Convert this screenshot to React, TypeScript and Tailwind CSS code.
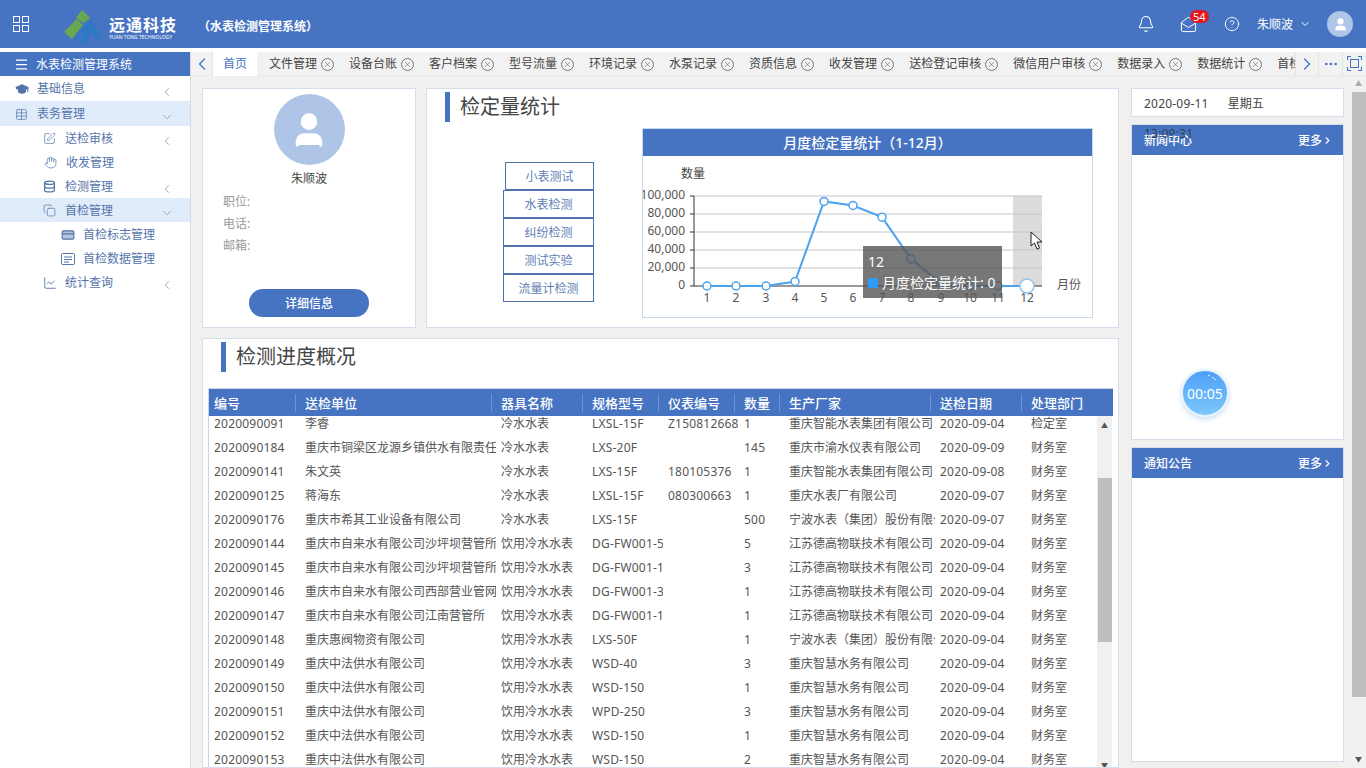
import type { ReactNode } from "react";
import { Bell, ChevronDown, ChevronLeft, ChevronRight, CircleHelp, Ellipsis, GraduationCap, MailOpen, Menu, Table, SquarePen, Hand, Database, Copy, CreditCard, ChartLine, User, X } from "lucide-react";

const tabs = ["文件管理", "设备台账", "客户档案", "型号流量", "环境记录", "水泵记录", "资质信息", "收发管理", "送检登记审核", "微信用户审核", "数据录入", "数据统计"];

const columns = [
  { label: "编号", w: "w-[87px]" },
  { label: "送检单位", w: "w-[196px]" },
  { label: "器具名称", w: "w-[91px]" },
  { label: "规格型号", w: "w-[76px]" },
  { label: "仪表编号", w: "w-[76px]" },
  { label: "数量", w: "w-[45px]" },
  { label: "生产厂家", w: "w-[151px]" },
  { label: "送检日期", w: "w-[91px]" },
  { label: "处理部门", w: "w-[76px]" },
];

const rows = [
  ["2020090091", "李睿", "冷水水表", "LXSL-15F", "Z150812668", "1", "重庆智能水表集团有限公司", "2020-09-04", "检定室"],
  ["2020090184", "重庆市铜梁区龙源乡镇供水有限责任公司", "冷水水表", "LXS-20F", "", "145", "重庆市渝水仪表有限公司", "2020-09-09", "财务室"],
  ["2020090141", "朱文英", "冷水水表", "LXS-15F", "180105376", "1", "重庆智能水表集团有限公司", "2020-09-08", "财务室"],
  ["2020090125", "蒋海东", "冷水水表", "LXSL-15F", "080300663", "1", "重庆水表厂有限公司", "2020-09-07", "财务室"],
  ["2020090176", "重庆市希其工业设备有限公司", "冷水水表", "LXS-15F", "", "500", "宁波水表（集团）股份有限公司", "2020-09-07", "财务室"],
  ["2020090144", "重庆市自来水有限公司沙坪坝营管所", "饮用冷水水表", "DG-FW001-5", "", "5", "江苏德高物联技术有限公司", "2020-09-04", "财务室"],
  ["2020090145", "重庆市自来水有限公司沙坪坝营管所", "饮用冷水水表", "DG-FW001-1", "", "3", "江苏德高物联技术有限公司", "2020-09-04", "财务室"],
  ["2020090146", "重庆市自来水有限公司西部营业管网", "饮用冷水水表", "DG-FW001-3", "", "1", "江苏德高物联技术有限公司", "2020-09-04", "财务室"],
  ["2020090147", "重庆市自来水有限公司江南营管所", "饮用冷水水表", "DG-FW001-1", "", "1", "江苏德高物联技术有限公司", "2020-09-04", "财务室"],
  ["2020090148", "重庆惠阀物资有限公司", "饮用冷水水表", "LXS-50F", "", "1", "宁波水表（集团）股份有限公司", "2020-09-04", "财务室"],
  ["2020090149", "重庆中法供水有限公司", "饮用冷水水表", "WSD-40", "", "3", "重庆智慧水务有限公司", "2020-09-04", "财务室"],
  ["2020090150", "重庆中法供水有限公司", "饮用冷水水表", "WSD-150", "", "1", "重庆智慧水务有限公司", "2020-09-04", "财务室"],
  ["2020090151", "重庆中法供水有限公司", "饮用冷水水表", "WPD-250", "", "3", "重庆智慧水务有限公司", "2020-09-04", "财务室"],
  ["2020090152", "重庆中法供水有限公司", "饮用冷水水表", "WSD-150", "", "1", "重庆智慧水务有限公司", "2020-09-04", "财务室"],
  ["2020090153", "重庆中法供水有限公司", "饮用冷水水表", "WSD-150", "", "2", "重庆智慧水务有限公司", "2020-09-04", "财务室"],
];

function Logo() {
  return (
    <svg width="36" height="36" viewBox="0 0 36 36" className="mt-[8px]">
      <path d="M0 22 L13 9 L19 15 L8 29 Z" fill="#6aa84f" />
      <path d="M12 8 L18 0 L26 8 L20 13 Z" fill="#6aa84f" />
      <path d="M21 14 L27 10 L36 24 L33 30 L26 21 L23 35 L17 34 L19 20 L12 32 L9 30 Z" fill="#2f78c4" />
    </svg>
  );
}

function TrendChart() {
  // x positions read off the reference, relative to the chart box
  const xs = [707, 736, 766, 795, 824, 853, 882, 911, 941, 970, 998, 1027].map((x) => x - 643);
  const values = [0, 0, 0, 5000, 94000, 89500, 76500, 30000, 3000, 0, 0, 0];
  const y = (v: number) => 130 - (v / 100000) * 90;
  const pts = xs.map((x, i) => `${x},${y(values[i])}`).join(" ");
  return (
    <svg width="449" height="161" viewBox="0 0 449 161" className="block">
      <rect x="370" y="40" width="29" height="90" fill="#dcdcdc" />
      {[0, 20000, 40000, 60000, 80000, 100000].map((v) => (
        <g key={v}>
          <line x1="51" x2="399" y1={y(v)} y2={y(v)} stroke={v === 0 ? "#333" : "#c4c4c4"} />
          <line x1="47" x2="51" y1={y(v)} y2={y(v)} stroke="#333" />
          <text x="42" y={y(v) + 3} textAnchor="end" fontSize="12" fill="#555">{v.toLocaleString("en-US")}</text>
        </g>
      ))}
      <line x1="51" x2="51" y1="40" y2="130" stroke="#333" />
      <text x="38" y="22" fontSize="12" fill="#444">数量</text>
      <text x="414" y="133" fontSize="12" fill="#555">月份</text>
      {xs.map((x, i) => (
        <text key={x} x={x} y="146" textAnchor="middle" fontSize="12" fill="#555">{i + 1}</text>
      ))}
      <polyline points={pts} fill="none" stroke="#4ba3ee" strokeWidth="2" />
      {xs.map((x, i) => (
        <circle key={x} cx={x} cy={y(values[i])} r={i === 11 ? 7 : 4} fill="#fff" stroke={i === 11 ? "#8fc4ef" : "#4ba3ee"} strokeWidth="1.5" />
      ))}
    </svg>
  );
}

function SectionTitle({ text }: { text: string }) {
  return (
    <div className="flex items-center gap-[10px]">
      <div className="h-[30px] w-[5px] bg-[#4774c2]" />
      <h2 className="text-[20px] font-normal leading-[30px] text-[#444]">{text}</h2>
    </div>
  );
}

function SideItem({ icon, label, indent, h, active, arrow, open }: { icon: ReactNode; label: string; indent: string; h: string; active?: boolean; arrow?: boolean; open?: boolean }) {
  return (
    <div className={`flex items-center pt-px text-[12px] text-[#5474ab] ${h} ${indent} ${active ? "bg-[#e1ecfb]" : ""}`}>
      <span className="flex w-[22px] shrink-0 items-center">{icon}</span>
      <span>{label}</span>
      {arrow && (
        <span className="absolute left-[160px] mt-[5px] text-[#888]">
          {open ? <ChevronDown size={14} strokeWidth={1.2} /> : <ChevronLeft size={14} strokeWidth={1.2} />}
        </span>
      )}
    </div>
  );
}

function NewsPanel({ title, className, children }: { title: string; className: string; children?: ReactNode }) {
  return (
    <div className={`relative border border-[#d5dfec] bg-white ${className}`}>
      <div className="flex h-[30px] items-center justify-between bg-[#4774c2] pl-3 pr-[10px] pt-px text-[12px] font-medium text-white">
        <span>{title}</span>
        <span className="flex items-center">更多<ChevronRight size={11} strokeWidth={2.5} /></span>
      </div>
      {children}
    </div>
  );
}

export default function App() {
  return (
    <div className="flex h-[768px] w-[1366px] flex-col overflow-hidden bg-[#f0f0f0] font-['Noto_Sans','Noto_Sans_CJK_SC',sans-serif]">
      {/* top bar */}
      <header className="flex h-12 shrink-0 items-center bg-[#4774c2] text-white">
        <div className="ml-[13px] grid h-4 w-4 grid-cols-2 gap-[2px]">
          <span className="border border-white" /><span className="border border-white" /><span className="border border-white" /><span className="border border-white" />
        </div>
        <div className="ml-[35px]"><Logo /></div>
        <div className="ml-[9px] flex w-[70px] flex-col pt-[8px]">
          <span className="text-[16px] font-bold leading-[16px] tracking-[1px]">远通科技</span>
          <span className="mt-[2px] whitespace-nowrap text-[5px] leading-[5px]">YUAN TONG TECHNOLOGY</span>
        </div>
        <span className="ml-[19px] mt-[6px] text-[12px] font-bold">（水表检测管理系统）</span>
        <div className="ml-auto flex items-center">
          <Bell size={18} strokeWidth={1.4} />
          <span className="relative ml-[25px]">
            <MailOpen size={17} strokeWidth={1.4} />
            <span className="absolute left-[10px] top-[-6px] rounded-full bg-[#e8141c] px-[3px] text-[11px] leading-[13px]">54</span>
          </span>
          <CircleHelp size={16} strokeWidth={1.4} className="ml-[27px]" />
          <span className="ml-[17px] mt-[2px] text-[12px]">朱顺波</span>
          <ChevronDown size={12} className="ml-[6px]" />
          <span className="ml-[16px] mr-[13px] flex h-[26px] w-[26px] items-center justify-center rounded-full bg-[#b0c6e8]">
            <User size={15} fill="#fff" stroke="#fff" />
          </span>
        </div>
      </header>

      <div className="h-1 shrink-0 bg-white" />

      <div className="flex min-h-0 flex-1">
        {/* sidebar */}
        <aside className="relative w-[191px] shrink-0 border-r border-[#dddddd] bg-white">
          <div className="flex h-6 items-center bg-[#4774c2] pl-[14px] pt-px text-[12px] text-white">
            <Menu size={15} className="mr-[7px]" />
            水表检测管理系统
          </div>
          <SideItem h="h-[25px]" indent="pl-[15px]" label="基础信息" arrow icon={<GraduationCap size={14} fill="#5474ab" />} />
          <SideItem h="h-[25px]" indent="pl-[15px]" label="表务管理" active arrow open icon={<Table size={13} strokeWidth={1.3} />} />
          <SideItem h="h-6" indent="pl-[43px]" label="送检审核" arrow icon={<SquarePen size={13} strokeWidth={1.3} />} />
          <SideItem h="h-6" indent="pl-[44px]" label="收发管理" icon={<Hand size={13} strokeWidth={1.3} />} />
          <SideItem h="h-6" indent="pl-[43px]" label="检测管理" arrow icon={<Database size={13} strokeWidth={2.4} />} />
          <SideItem h="h-6" indent="pl-[43px]" label="首检管理" active arrow open icon={<Copy size={13} strokeWidth={1.3} />} />
          <SideItem h="h-6" indent="pl-[61px]" label="首检标志管理" icon={<CreditCard size={14} fill="#b6c6e0" />} />
          <SideItem
            h="h-6"
            indent="pl-[61px]"
            label="首检数据管理"
            icon={
              <svg width="14" height="12" viewBox="0 0 14 12" fill="none" stroke="currentColor">
                <rect x="0.5" y="0.5" width="13" height="11" rx="1" />
                <path d="M3 4 H11 M3 6.5 H11 M3 9 H8" />
              </svg>
            }
          />
          <SideItem h="h-6" indent="pl-[43px]" label="统计查询" arrow icon={<ChartLine size={14} strokeWidth={1.5} />} />
        </aside>

        <div className="flex min-w-0 flex-1 flex-col">
          {/* tab bar */}
          <div className="flex h-6 shrink-0 items-center border-b border-[#e8e8e8] bg-[#f2f2f2] text-[12px] text-[#444]">
            <span className="flex h-6 w-[22px] shrink-0 items-center justify-center border-r border-[#e4e4e4] text-[#4774c2]"><ChevronLeft size={20} strokeWidth={1.5} /></span>
            <span className="flex h-6 w-[44px] shrink-0 items-center justify-center bg-white pt-px text-[#4774c2]">首页</span>
            <div className="flex min-w-0 flex-1 items-center overflow-hidden whitespace-nowrap pl-[12px] pt-px">
              {tabs.map((t) => (
                <span key={t} className="mr-[15px] flex shrink-0 items-center gap-[4px]">
                  {t}
                  <span className="flex h-[13px] w-[13px] items-center justify-center rounded-full border border-[#777]"><X size={9} strokeWidth={1.3} /></span>
                </span>
              ))}
              <span className="shrink-0">首检管理</span>
            </div>
            <span className="flex h-6 w-[23px] shrink-0 items-center justify-center border-l border-[#e4e4e4] text-[#4774c2]"><ChevronRight size={20} strokeWidth={1.5} /></span>
            <span className="flex h-6 w-[24px] shrink-0 items-center justify-center border-l border-[#e4e4e4] text-[#4774c2]"><Ellipsis size={16} /></span>
            <span className="flex h-6 w-[24px] shrink-0 items-center justify-center border-l border-[#e4e4e4] text-[#4774c2]">
              <svg width="15" height="15" viewBox="0 0 15 15" fill="none" stroke="currentColor">
                <path d="M0.5 4 V0.5 H4 M11 0.5 H14.5 V4 M14.5 11 V14.5 H11 M4 14.5 H0.5 V11" strokeWidth="1.2" />
                <rect x="3.5" y="3.5" width="8" height="8" />
              </svg>
            </span>
          </div>

          <div className="flex min-h-0 flex-1">
            <main className="flex w-[928px] shrink-0 flex-col pl-[11px] pt-[12px]">
              <div className="flex h-[240px] shrink-0 gap-[10px]">
                {/* profile */}
                <section className="flex w-[214px] shrink-0 flex-col items-center border border-[#d5dfec] bg-white pt-[5px] text-[12px]">
                  <span className="flex h-[71px] w-[71px] items-center justify-center rounded-full bg-[#aec5e8]">
                    <User size={40} fill="#fff" stroke="#fff" />
                  </span>
                  <span className="mt-[5px] text-[#444]">朱顺波</span>
                  <div className="mt-[5px] flex w-full flex-col gap-1 pl-[20px] leading-[18px] text-[#999]">
                    <span>职位:</span>
                    <span>电话:</span>
                    <span>邮箱:</span>
                  </div>
                  <button className="mt-[34px] h-7 w-[120px] rounded-full bg-[#4774c2] pt-px text-[12px] font-medium text-white">详细信息</button>
                </section>

                {/* statistic */}
                <section className="relative flex-1 border border-[#d5dfec] bg-white pl-[18px] pt-[3px]">
                  <SectionTitle text="检定量统计" />
                  <div className="flex">
                    <div className="ml-[59px] mt-[40px] flex w-[90px] flex-col">
                      {["小表测试", "水表检测", "纠纷检测", "测试实验", "流量计检测"].map((b, i) => (
                        <div key={b} className={`flex h-[28px] items-center justify-center border border-[#4f72ad] bg-white pt-px text-[12px] text-[#5f7fb5] ${i === 0 ? "ml-px" : "-ml-px"}`}>{b}</div>
                      ))}
                    </div>
                    <div className="ml-[48px] mt-[6px] w-[451px] border border-[#c8d8ec]">
                      <div className="flex h-[27px] items-center justify-center bg-[#4774c2] text-[14px] font-medium text-white">月度检定量统计（1-12月）</div>
                      <TrendChart />
                    </div>
                  </div>
                  {/* chart tooltip */}
                  <div className="absolute left-[436px] top-[157px] flex h-[52px] w-[139px] flex-col justify-center bg-[#555]/80 pl-[5px] pt-[2px] text-white">
                    <span className="text-[14px] leading-[20px]">12</span>
                    <span className="flex items-center gap-[4px] whitespace-nowrap text-[14px] leading-[22px]"><span className="h-[10px] w-[10px] bg-[#2f9bf4]" />月度检定量统计: 0</span>
                  </div>
                  <svg className="absolute left-[603px] top-[142px]" width="14" height="20" viewBox="0 0 14 20">
                    <path d="M1 1 L1 15 L4.5 12 L7 18 L9.5 17 L7 11 L12 11 Z" fill="#fff" stroke="#222" />
                  </svg>
                </section>
              </div>

              {/* progress table */}
              <section className="mt-[10px] flex min-h-0 flex-1 flex-col overflow-hidden border border-[#d5dfec] bg-white">
                <div className="h-[49px] shrink-0 pl-[18px] pt-[3px]"><SectionTitle text="检测进度概况" /></div>
                <div className="ml-[5px] w-[905px] min-h-0 flex-1 border-l border-t border-[#c8d8ec]">
                  <div className="relative z-10 flex h-[27px] items-center bg-[#4774c2] text-[13px] font-medium text-white">
                    {columns.map((c, i) => (
                      <div key={c.label} className={`${c.w} shrink-0 border-r border-[#6f93d0] leading-[18px] last:border-r-0 ${i === 0 ? "pl-[5px]" : "pl-[9px]"}`}>{c.label}</div>
                    ))}
                  </div>
                  <div className="relative -mt-[4px] overflow-hidden">
                    {rows.map((r) => (
                      <div key={r[0]} className="flex h-6 items-center text-[12px] text-[#555]">
                        {r.map((cell, i) => (
                          <div key={i} className={`${i === 0 ? "w-[91px]" : columns[i].w} shrink-0 overflow-hidden whitespace-nowrap pl-[5px] ${/^[\x00-\x7f]*$/.test(cell) ? "tracking-[0.2px]" : ""}`}>{cell}</div>
                        ))}
                      </div>
                    ))}
                    {/* scrollbar */}
                    <div className="absolute right-[1px] top-0 flex h-full w-[15px] flex-col items-center bg-[#f0f0f0]">
                      <span className="mt-[8px] shrink-0 text-[7px] leading-[12px] text-[#555]">▲</span>
                      <div className="mt-[46px] h-[164px] w-[14px] shrink-0 bg-[#bebebe]" />
                      <span className="mt-[118px] shrink-0 text-[7px] leading-[12px] text-[#555]">▼</span>
                    </div>
                  </div>
                </div>
              </section>
            </main>

            {/* right column */}
            <aside className="flex min-w-0 flex-1 flex-col gap-[7px] pl-3 pr-[7px] pt-[12px]">
              <div className="flex h-[29px] shrink-0 items-center gap-[19px] border border-[#d5dfec] bg-white pl-3 pt-[2px] text-[12px] text-[#444]">
                <span className="tracking-[0.2px]">2020-09-11</span>
                <span>星期五</span>
              </div>
              <NewsPanel title="新闻中心" className="h-[316px] shrink-0">
                <span className="absolute left-3 top-0 text-[12px] tracking-[0.2px] text-[#222]/70">13:09:31</span>
                <div className="absolute left-[49px] top-[244px] flex h-[48px] w-[48px] items-center justify-center rounded-full border-2 border-[#e6f2fc] bg-gradient-to-b from-[#4f9ef7] to-[#7cc8fb] text-[14px] text-white shadow-[0_2px_5px_rgba(120,170,220,0.4)]">
                  00:05
                  <svg className="absolute left-[24px] top-[3px]" width="12" height="8" viewBox="0 0 12 8" fill="none" stroke="#dcefff">
                    <path d="M1 1 L3 2 M5 3 L9 6" />
                  </svg>
                </div>
              </NewsPanel>
              <NewsPanel title="通知公告" className="h-[315px] shrink-0" />
            </aside>

            <div className="flex w-[15px] shrink-0 flex-col items-center bg-[#f1f1f1]">
              <span className="mt-[2px] text-[7px] leading-[12px] text-[#aaa]">▲</span>
              <div className="mt-[2px] h-[605px] w-[14px] shrink-0 bg-[#bebebe]" />
              <span className="mt-[57px] text-[7px] leading-[12px] text-[#555]">▼</span>
            </div>
          </div>
        </div>
      </div>
    </div>
  );
}
